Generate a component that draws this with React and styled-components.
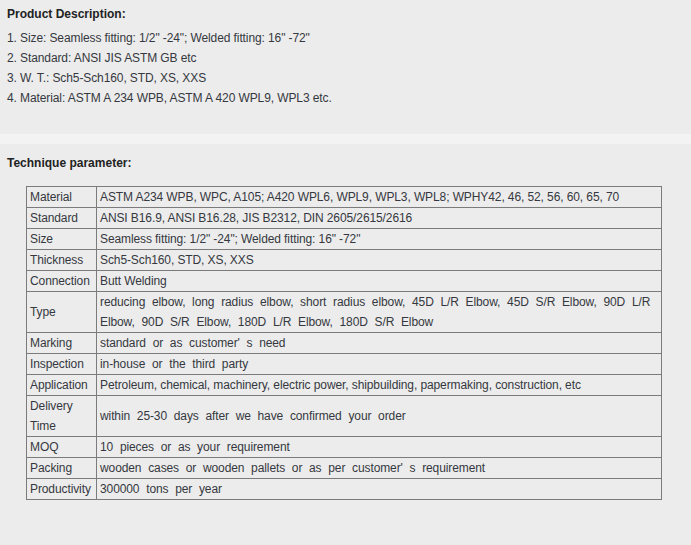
import React from 'react'
import styled, { createGlobalStyle } from 'styled-components'

const GlobalStyle = createGlobalStyle`
  html, body {
    margin: 0;
    padding: 0;
    background: #ececec;
  }
  body {
    font-family: "Liberation Sans", Arial, sans-serif;
    font-size: 12px;
    letter-spacing: -0.1px;
    color: #353840;
  }
`

const Page = styled.div`
  width: 691px;
  min-height: 545px;
  background: #ececec;
`

const Section = styled.div`
  padding: ${p => p.$pad || '4px 0 0 7px'};
`

const Title = styled.div`
  font-weight: bold;
  color: #222;
  line-height: 20px;
  letter-spacing: 0;
  margin-bottom: ${p => p.$gap || '4px'};
`

const Line = styled.div`
  line-height: 20px;
`

const Band = styled.div`
  height: 10px;
  background: #f3f3f3;
  margin-top: 26px;
`

const Table = styled.table`
  border-collapse: collapse;
  width: 636px;
  margin-left: 19px;
  border: 1px solid #7b7b7b;
  table-layout: fixed;
`

const Cell = styled.td`
  border: 1px solid #7b7b7b;
  padding: 0 3px;
  line-height: 20px;
  vertical-align: middle;
  word-spacing: ${p => (p.$wide ? '3.5px' : '0')};
  white-space: ${p => (p.$nowrap ? 'nowrap' : 'normal')};
`

const rows = [
  ['Material', 'ASTM A234 WPB, WPC, A105; A420 WPL6, WPL9, WPL3, WPL8; WPHY42, 46, 52, 56, 60, 65, 70'],
  ['Standard', 'ANSI B16.9, ANSI B16.28, JIS B2312, DIN 2605/2615/2616'],
  ['Size', 'Seamless fitting: 1/2" -24"; Welded fitting: 16" -72"'],
  ['Thickness', 'Sch5-Sch160, STD, XS, XXS'],
  ['Connection', 'Butt Welding'],
  ['Type', 'reducing elbow, long radius elbow, short radius elbow, 45D L/R Elbow, 45D S/R Elbow, 90D\u00a0L/R Elbow, 90D S/R Elbow, 180D L/R Elbow, 180D S/R Elbow', true],
  ['Marking', "standard or as customer' s need", true],
  ['Inspection', 'in-house or the third party', true],
  ['Application', 'Petroleum, chemical, machinery, electric power, shipbuilding, papermaking, construction, etc'],
  ['Delivery Time', 'within 25-30 days after we have confirmed your order', true],
  ['MOQ', '10 pieces or as your requirement', true],
  ['Packing', "wooden cases or wooden pallets or as per customer' s requirement", true],
  ['Productivity', '300000 tons per year', true],
]

export default function App() {
  return (
    <Page>
      <GlobalStyle />
      <Section>
        <Title>Product Description:</Title>
        <Line>1. Size: Seamless fitting: 1/2" -24"; Welded fitting: 16" -72"</Line>
        <Line>2. Standard: ANSI JIS ASTM GB etc</Line>
        <Line>3. W. T.: Sch5-Sch160, STD, XS, XXS</Line>
        <Line>4. Material: ASTM A 234 WPB, ASTM A 420 WPL9, WPL3 etc.</Line>
      </Section>
      <Band />
      <Section $pad="9px 0 0 7px">
        <Title $gap="13px">Technique parameter:</Title>
        <Table>
          <colgroup>
            <col style={{ width: 70 }} />
            <col />
          </colgroup>
          <tbody>
            {rows.map(([k, v, wide]) => (
              <tr key={k}>
                <Cell $nowrap={k === 'Productivity'}>{k}</Cell>
                <Cell $wide={wide}>{v}</Cell>
              </tr>
            ))}
          </tbody>
        </Table>
      </Section>
    </Page>
  )
}
